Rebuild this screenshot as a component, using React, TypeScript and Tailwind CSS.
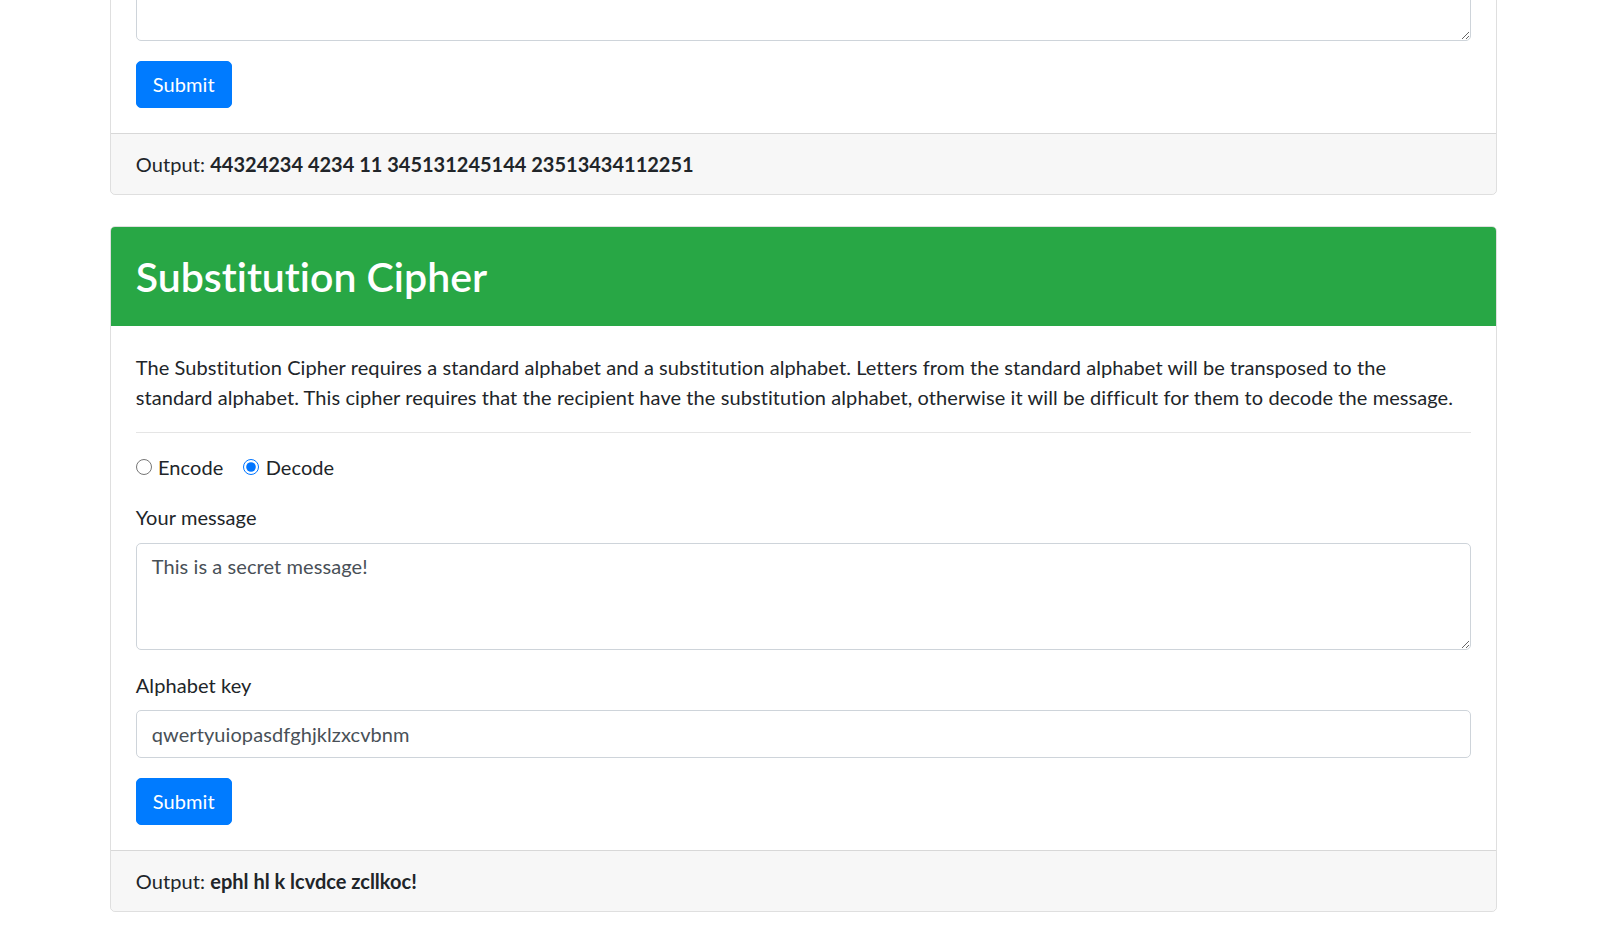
import React from "react";

function SubmitButton() {
  return (
    <button
      type="button"
      className="block h-[47.5px] rounded-[5px] border border-[#007bff] bg-[#007bff] px-[16px] text-[20px] leading-[30px] text-white"
    >
      Submit
    </button>
  );
}

function Footer({ value }: { value: string }) {
  return (
    <div className="rounded-b-[4px] border-t border-[rgba(0,0,0,0.125)] bg-[rgba(0,0,0,0.03)] px-[25px] py-[15px]">
      Output: <strong className="font-bold tracking-normal">{value}</strong>
    </div>
  );
}

export default function App() {
  return (
    <div className="min-h-screen overflow-hidden bg-white font-['Lato','Liberation_Sans',sans-serif] text-[20px] leading-[30px] tracking-[0.08px] text-[#212529] [font-variant-ligatures:none]">
      <div className="mx-auto w-[1387.5px]">
        {/* Previous card, scrolled partly out of view */}
        <div className="mb-[30.5px] mt-[-93px] rounded-[5px] border border-[rgba(0,0,0,0.125)]">
          <div className="p-[25px]">
            <textarea
              readOnly
              rows={3}
              defaultValue=""
              className="block h-[107.5px] w-full rounded-[5px] border border-[#ced4da] bg-white px-[15px] py-[7.5px] text-[20px] leading-[30px] text-[#495057] outline-none"
            />
            <div className="mt-[20px]">
              <SubmitButton />
            </div>
          </div>
          <Footer value="44324234 4234 11 345131245144 23513434112251" />
        </div>

        {/* Substitution Cipher card */}
        <div className="mb-[30px] overflow-hidden rounded-[5px] border border-[rgba(0,0,0,0.125)]">
          <div className="bg-[#28a745] px-[25px] pb-[25px] pt-[26px]">
            <h2 className="text-[41px] font-semibold leading-[48px] tracking-normal text-white">
              Substitution Cipher
            </h2>
          </div>
          <div className="px-[25px] pb-[25px] pt-[26px]">
            <p className="mb-[20px]">
              The Substitution Cipher requires a standard alphabet and a substitution alphabet. Letters from the
              standard alphabet will be transposed to the
              <br />
              standard alphabet. This cipher requires that the recipient have the substitution alphabet, otherwise it
              will be difficult for them to decode the message.
            </p>
            <hr className="mb-[19px] border-0 border-t border-[rgba(0,0,0,0.1)]" />
            <div className="mb-[20px] flex h-[30px] items-center">
              <label className="mr-[20px] flex items-center">
                <input
                  type="radio"
                  name="mode"
                  className="m-0 mr-[6.25px] h-[16px] w-[16px] accent-[#0075ff]"
                />
                Encode
              </label>
              <label className="flex items-center">
                <input
                  type="radio"
                  name="mode"
                  defaultChecked
                  className="m-0 mr-[6.25px] h-[16px] w-[16px] accent-[#0075ff]"
                />
                Decode
              </label>
            </div>
            <div className="mb-[20px]">
              <label className="mb-[11px] block">Your message</label>
              <textarea
                readOnly
                rows={3}
                defaultValue="This is a secret message!"
                className="block h-[107.5px] w-full rounded-[5px] border border-[#ced4da] bg-white px-[15px] py-[7.5px] text-[20px] leading-[30px] text-[#495057] outline-none"
              />
            </div>
            <div className="mb-[20px]">
              <label className="mb-[10px] block">Alphabet key</label>
              <input
                readOnly
                type="text"
                defaultValue="qwertyuiopasdfghjklzxcvbnm"
                className="block h-[47.5px] w-full rounded-[5px] border border-[#ced4da] bg-white px-[15px] py-[7.5px] text-[20px] leading-[30px] text-[#495057] outline-none"
              />
            </div>
            <SubmitButton />
          </div>
          <Footer value="ephl hl k lcvdce zcllkoc!" />
        </div>
      </div>
    </div>
  );
}
